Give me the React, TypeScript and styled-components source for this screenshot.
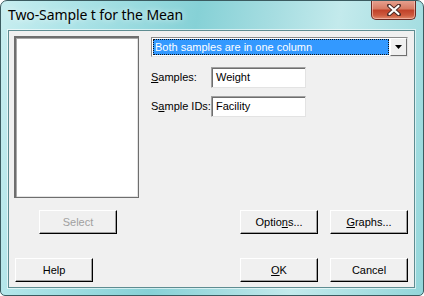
import React from "react";
import styled, { createGlobalStyle } from "styled-components";

const GlobalStyle = createGlobalStyle`
  html, body {
    margin: 0;
    padding: 0;
    background: #ffffff;
  }
  * {
    box-sizing: border-box;
  }
`;

const Frame = styled.div`
  width: 424px;
  height: 296px;
  display: flex;
  flex-direction: column;
  padding: 0 8px 7px 7px;
  border: 1px solid #3b5b60;
  border-radius: 7px 7px 5px 5px;
  background: linear-gradient(
    100deg,
    #c8eef0 0%,
    #a9e2e6 18%,
    #86d1d6 42%,
    #a6dde1 58%,
    #c3eaec 72%,
    #93d6da 100%
  );
  font-family: "Liberation Sans", Arial, sans-serif;
  overflow: hidden;
`;

const TitleBar = styled.div`
  height: 29px;
  display: flex;
  align-items: flex-start;
  justify-content: space-between;
`;

const Title = styled.div`
  font-family: "Noto Sans", "Open Sans", sans-serif;
  font-size: 14px;
  color: #000;
  padding-top: 4px;
  text-shadow: 0 0 6px rgba(255, 255, 255, 0.9);
  letter-spacing: -0.1px;
`;

const CloseButton = styled.div`
  width: 45px;
  height: 20px;
  margin-top: -1px;
  margin-right: -1px;
  border: 1px solid #6b2a22;
  border-top: none;
  border-radius: 0 0 5px 5px;
  background: linear-gradient(
    to bottom,
    #e7a493 0%,
    #d77c64 45%,
    #c1432a 55%,
    #cd5a3e 80%,
    #e08a6c 100%
  );
  box-shadow: inset 0 0 0 1px rgba(255, 210, 200, 0.55);
  display: flex;
  align-items: center;
  justify-content: center;
`;

const Client = styled.div`
  flex: 1;
  background: #f0f0f0;
  border: 1px solid #5e8c91;
  box-shadow: 0 0 0 1px rgba(255, 255, 255, 0.6);
  display: flex;
  flex-direction: column;
  padding: 5px 6px 0 5px;
  font-size: 11px;
  color: #000;
`;

const TopRow = styled.div`
  display: flex;
  align-items: flex-start;
`;

const ListBox = styled.div`
  width: 126px;
  height: 162px;
  background: #fff;
  border: 1px solid #6e6e6e;
  box-shadow: inset 1px 1px 0 #6e6e6e, inset 2px 2px 0 #a8a8a8,
    inset -1px -1px 0 #e3e3e3;
`;

const Panel = styled.div`
  margin-left: 12px;
  margin-top: 1px;
  display: flex;
  flex-direction: column;
  gap: 9px;
`;

const Combo = styled.div`
  width: 257px;
  height: 20px;
  display: flex;
  border: 1px solid #8a8a8a;
  border-right-color: #e3e3e3;
  border-bottom-color: #e3e3e3;
  background: #fff;
  margin-bottom: 1px;
`;

const ComboValue = styled.div`
  flex: 1;
  margin: 1px;
  padding-left: 2px;
  background: #3399ff;
  color: #fff;
  outline: 1px dotted #111;
  outline-offset: -1px;
  line-height: 16px;
  font-size: 11px;
`;

const ComboArrow = styled.div`
  width: 17px;
  background: #f0f0f0;
  border: 1px solid;
  border-color: #fff #6e6e6e #6e6e6e #fff;
  display: flex;
  align-items: center;
  justify-content: center;
`;

const Field = styled.div`
  display: flex;
  align-items: center;
  height: 20px;
`;

const Label = styled.div`
  width: 60px;
`;

const TextBox = styled.div`
  width: 95px;
  height: 21px;
  background: #fff;
  border: 1px solid #a0a0a0;
  border-right-color: #e3e3e3;
  border-bottom-color: #e3e3e3;
  box-shadow: inset 1px 1px 0 #6e6e6e;
  padding: 3px 0 0 4px;
`;

const ButtonRow = styled.div<{ $top: number; $lead: number }>`
  display: flex;
  margin-top: ${(p) => p.$top}px;
  padding-left: ${(p) => p.$lead}px;
`;

const Spacer = styled.div`
  flex: 1;
`;

const Button = styled.div<{ $disabled?: boolean }>`
  width: 78px;
  height: 24px;
  background: #f0f0f0;
  border: 1px solid;
  border-color: #fff #000 #000 #fff;
  box-shadow: inset -1px -1px 0 #a0a0a0;
  display: flex;
  align-items: center;
  justify-content: center;
  color: ${(p) => (p.$disabled ? "#a0a0a0" : "#000")};
  font-size: 11px;
  & + & {
    margin-left: 12px;
  }
`;

const Key = styled.span`
  text-decoration: underline;
`;

export default function App() {
  return (
    <>
      <GlobalStyle />
      <Frame>
        <TitleBar>
          <Title>Two-Sample t for the Mean</Title>
          <CloseButton>
            <svg width="14" height="12" viewBox="0 0 14 12">
              <path
                d="M2 1.5 L12 10.5 M12 1.5 L2 10.5"
                stroke="#4a2a26"
                strokeWidth="4"
                strokeLinecap="round"
              />
              <path
                d="M2.5 2 L11.5 10 M11.5 2 L2.5 10"
                stroke="#fff"
                strokeWidth="2.2"
                strokeLinecap="round"
              />
            </svg>
          </CloseButton>
        </TitleBar>
        <Client>
          <TopRow>
            <ListBox />
            <Panel>
              <Combo>
                <ComboValue>Both samples are in one column</ComboValue>
                <ComboArrow>
                  <svg width="7" height="4" viewBox="0 0 7 4">
                    <path d="M0 0 H7 L3.5 4 Z" fill="#000" />
                  </svg>
                </ComboArrow>
              </Combo>
              <Field>
                <Label>
                  <Key>S</Key>amples:
                </Label>
                <TextBox>Weight</TextBox>
              </Field>
              <Field>
                <Label>
                  S<Key>a</Key>mple IDs:
                </Label>
                <TextBox>Facility</TextBox>
              </Field>
            </Panel>
          </TopRow>
          <ButtonRow $top={12} $lead={25}>
            <Button $disabled>Select</Button>
            <Spacer />
            <Button>
              Optio<Key>n</Key>s...
            </Button>
            <Button>
              <Key>G</Key>raphs...
            </Button>
          </ButtonRow>
          <ButtonRow $top={24} $lead={1}>
            <Button>Help</Button>
            <Spacer />
            <Button>
              <Key>O</Key>K
            </Button>
            <Button>Cancel</Button>
          </ButtonRow>
        </Client>
      </Frame>
    </>
  );
}
